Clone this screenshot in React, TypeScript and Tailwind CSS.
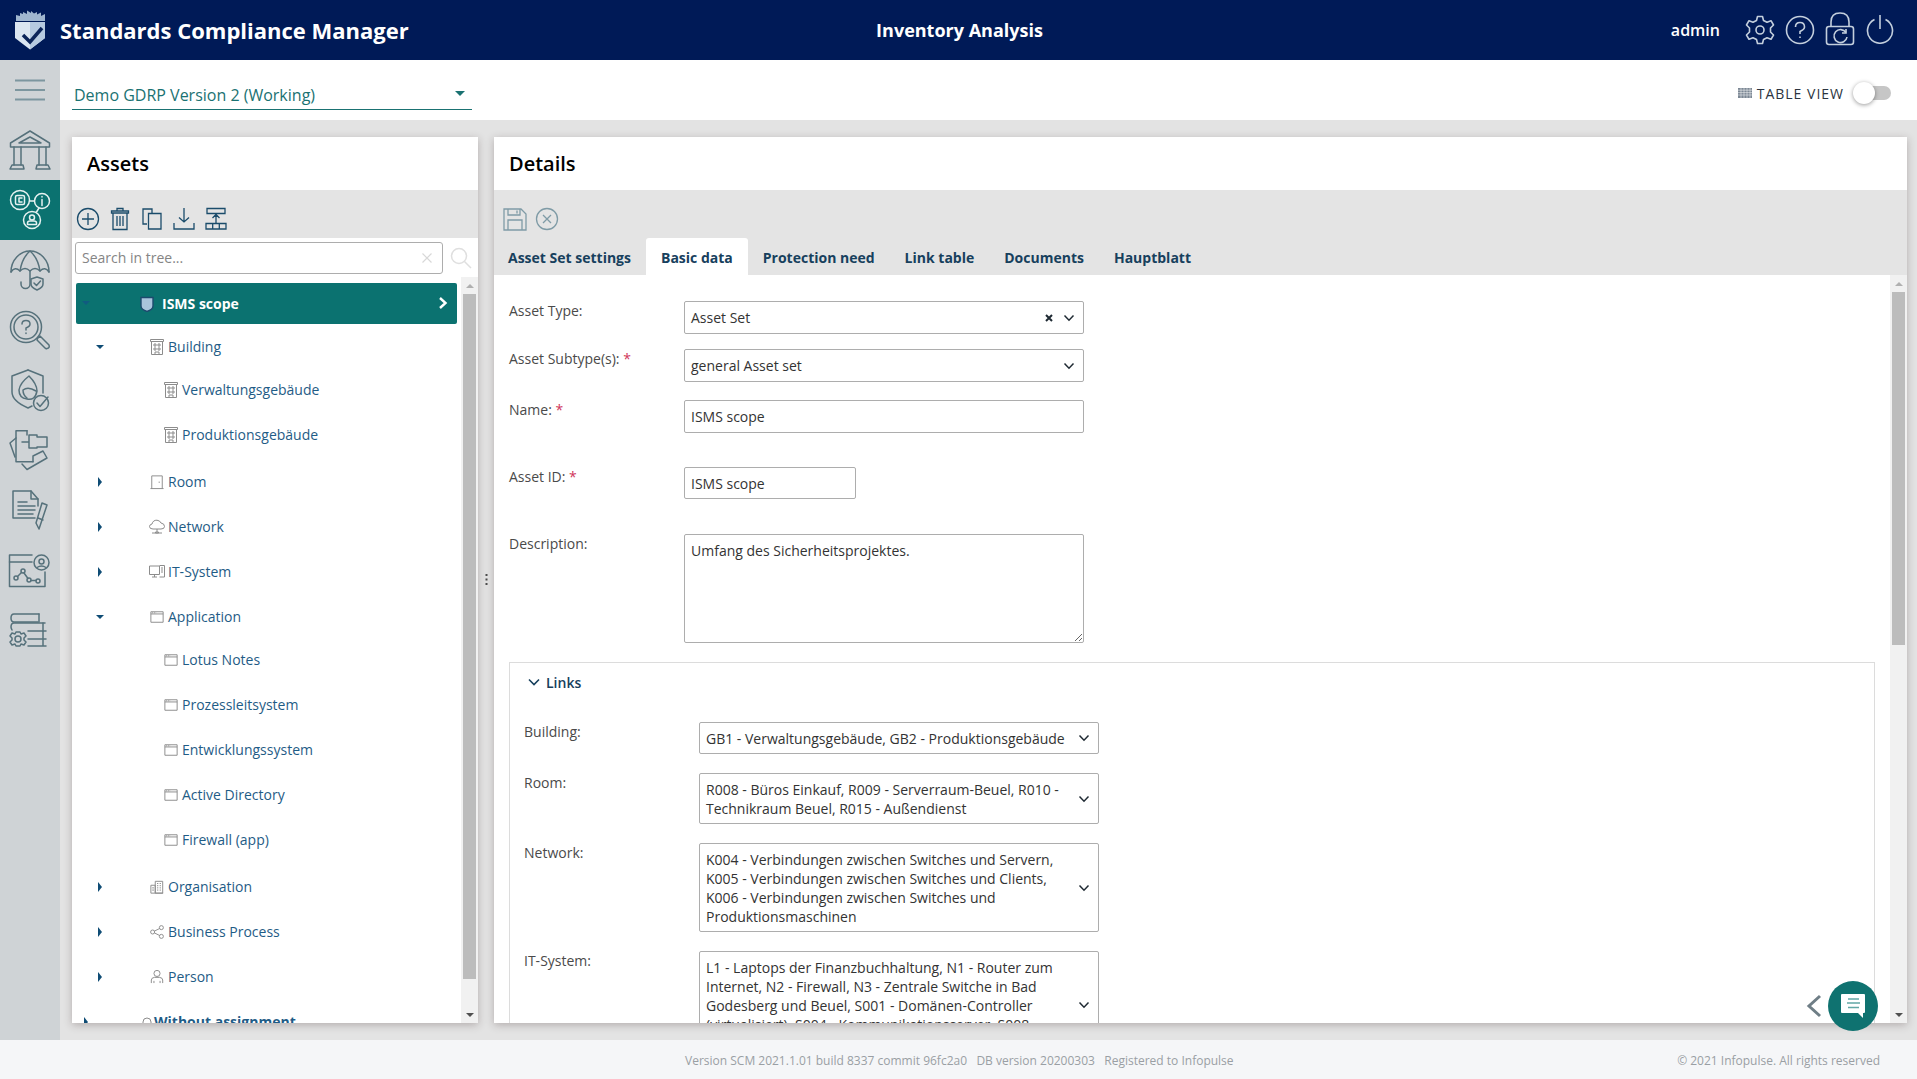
import type { ReactNode } from "react";

const Cell = ({ children, active }: { children: ReactNode; active?: boolean }) => (
  <div className={active ? "h-[60px] bg-[#0b7270]" : "h-[60px]"}>
    <svg
      width="60"
      height="60"
      viewBox="0 0 60 60"
      fill="none"
      stroke={active ? "#e6f2f1" : "#56717b"}
      strokeWidth="1.5"
      strokeLinecap="round"
      strokeLinejoin="round"
    >
      {children}
    </svg>
  </div>
);

const Sidebar = () => (
  <aside className="w-[60px] shrink-0 bg-[#cfd3d6]">
    <div className="h-[60px]">
      <svg width="60" height="60" viewBox="0 0 60 60" stroke="#7d969f" strokeWidth="2">
        <path d="M15 20.5H45M15 30H45M15 39.5H45" />
      </svg>
    </div>
    <Cell>
      <path d="M30 11L10.5 23V27H49.5V23Z" />
      <path d="M19 23L30 17L41 23Z" />
      <path d="M14 27V45M21 27V45M39 27V45M46 27V45" />
      <path d="M12 45H23L24 49H10ZM37 45H48L50 49H36Z" />
    </Cell>
    <Cell active>
      <circle cx="20" cy="20" r="9.5" />
      <rect x="15.5" y="15.5" width="9" height="9" rx="1.5" />
      <path d="M22 18H19V22H22" />
      <circle cx="42" cy="21" r="7.5" />
      <path d="M42 19.5V25.5M42 16.5V17" />
      <circle cx="32" cy="40" r="8.5" />
      <circle cx="32" cy="37.5" r="2.5" />
      <path d="M27.5 44.5V43Q27.5 41 30 41H34Q36.5 41 36.5 43V44.5Z" />
      <path d="M30 21H34M39 28L36.5 32" />
    </Cell>
    <Cell>
      <path d="M11 32C11 20 20 11 30 11C40 11 49 20 49 32" />
      <path d="M11 32Q15 26 20 31Q25 26 30 31Q35 26 40 31Q45 26 49 32" />
      <path d="M20 31Q22 18 30 11Q38 18 40 31" />
      <path d="M30 31V44A3.5 3.5 0 0 1 21 44V42" />
      <path d="M37 37L43 39V44Q43 47.5 37 50Q31 47.5 31 44V39Z" />
      <path d="M34 43L36.5 45.5L40.5 41" />
    </Cell>
    <Cell>
      <circle cx="26" cy="27" r="15.5" />
      <circle cx="26" cy="27" r="12" />
      <path d="M22 24Q22 20.5 26 20.5Q30 20.5 30 24Q30 26.5 26 28V30M26 33V33.5" />
      <path d="M37.5 38.5L40 36L49 45Q50 48 47 48.5Q46 49 45 48L37 40Z" />
    </Cell>
    <Cell>
      <path d="M28 10L12 16V32Q12 41 28 48L32 46" />
      <path d="M28 10L43 16V33" />
      <path d="M29 16Q37 24 37 31Q35 41 27 39Q19 38 19 30Q20 23 29 16Z" />
      <path d="M36 31Q28 26 23 30Q23 35 27 38" />
      <circle cx="41" cy="43" r="7.5" />
      <path d="M37 43L40 46.5L48 37" />
    </Cell>
    <Cell>
      <path d="M27 10.7H16V41.7H33" />
      <path d="M16 18L10 23L15 37" />
      <path d="M29 15H37V17H47V27H37V28H29ZM22 22H29" />
      <path d="M27 15V10.7" />
      <path d="M22 44L27 49.5L47 38L43 31L33 36V41.7" />
    </Cell>
    <Cell>
      <path d="M38 26V19L31 11H13V38H35" />
      <path d="M31 11V19H38" />
      <path d="M18 22H27M18 26H35M18 30H35M18 34H33" />
      <path d="M42 23L47 25L39 49L36 43Z" />
      <path d="M38 38L43 40" />
    </Cell>
    <Cell>
      <path d="M32 15H9.5V46.5H45V32" />
      <path d="M9.5 22H32" />
      <circle cx="41.5" cy="22.5" r="7.5" />
      <circle cx="41.5" cy="21.5" r="2.5" />
      <path d="M37 27.5Q41.5 24.5 46 27.5" />
      <circle cx="16" cy="38" r="2" />
      <circle cx="23" cy="31" r="2" />
      <circle cx="29" cy="40" r="2" />
      <circle cx="38" cy="41" r="2" />
      <path d="M17.5 36.5L21.5 32.5M24 33L28 38.5M31 40.5H36" />
    </Cell>
    <Cell>
      <path d="M39 14H14Q11 14 11 18Q11 22 14 22H38" />
      <path d="M45 23H14Q11 23 11 27Q11 28 12 30" />
      <path d="M43 23V31M39 14V22" />
      <path d="M46 31H28M46 39H28M46 46H28M43 31V46" />
      <circle cx="18" cy="39" r="3" />
      <path d="M16 32H20L21 34L24 33L26 36L24 38V40L26 42L24 45L21 44L20 46H16L15 44L12 45L10 42L12 40V38L10 36L12 33L15 34Z" />
    </Cell>
  </aside>
);

const Logo = () => (
  <svg width="32" height="40" viewBox="0 0 32 40" className="ml-[14px] shrink-0">
    <path d="M2 5L6 6V3L9 4V2L13 4V0.5L17 3V1L20 3.5L23 2V4.5L27 2.5V6L31 4V11H2Z" fill="#9fb6cf" />
    <path d="M1 12H31V28L16 39.5L1 28Z" fill="#dbe6f1" />
    <path d="M16 12H31V28L16 39.5Z" fill="#b6cae0" />
    <path d="M9 25L16 32L28 18" fill="none" stroke="#0b2459" strokeWidth="3.5" />
  </svg>
);

const Header = () => (
  <header className="h-[60px] shrink-0 bg-[#001a57] grid grid-cols-[minmax(0,1fr)_auto_minmax(0,1fr)] items-center text-white">
    <div className="flex items-center">
      <Logo />
      <span className="ml-[14px] text-[22px] font-bold whitespace-nowrap">Standards Compliance Manager</span>
    </div>
    <span className="pl-[2px] text-[18px] font-bold">Inventory Analysis</span>
    <div className="flex items-center justify-end pr-[23px]">
      <span className="text-[16px] font-semibold mr-[24px]">admin</span>
      <svg width="32" height="32" viewBox="0 0 32 32" fill="none" stroke="#c3cfdd" strokeWidth="1.6" className="mr-[9px]">
        <circle cx="16" cy="16" r="4" />
        <path d="M13.5 2.5H18.5L19.5 6.5L23 8.2L27 6.7L29.5 11L26.5 14V18L29.5 21L27 25.3L23 23.8L19.5 25.5L18.5 29.5H13.5L12.5 25.5L9 23.8L5 25.3L2.5 21L5.5 18V14L2.5 11L5 6.7L9 8.2L12.5 6.5Z" strokeLinejoin="round" />
      </svg>
      <svg width="30" height="30" viewBox="0 0 30 30" fill="none" stroke="#c3cfdd" strokeWidth="1.6" className="mr-[10px]">
        <circle cx="15" cy="15" r="13.5" />
        <path d="M10.5 12Q10.5 7.5 15 7.5Q19.5 7.5 19.5 12Q19.5 14.5 15 16.5V19" />
        <path d="M15 21.5V23" />
      </svg>
      <svg width="30" height="34" viewBox="0 0 30 34" fill="none" stroke="#c3cfdd" strokeWidth="1.6" className="mr-[11px] mb-[3px]">
        <path d="M6 14V10Q6 1 15 1Q24 1 24 10V14" />
        <rect x="1.5" y="14.5" width="27" height="18" rx="2.5" />
        <path d="M21 20.5A6.5 6.5 0 1 0 22 25" />
        <path d="M21 17V21H17" />
      </svg>
      <svg width="28" height="30" viewBox="0 0 28 30" fill="none" stroke="#c3cfdd" strokeWidth="1.6" className="mb-[2px]">
        <path d="M14 1V15" />
        <path d="M8.5 5.5A12.5 12.5 0 1 0 19.5 5.5" />
      </svg>
    </div>
  </header>
);

const SubBar = () => (
  <div className="h-[60px] shrink-0 bg-white flex items-center justify-between pl-[12px] pr-[26px]">
    <div className="w-[400px] h-[50px] border-b border-[#1a7272] flex items-end justify-between pl-[2px] pr-[7px] pb-[2px] self-start">
      <span className="text-[16px] leading-[24px] text-[#1a7272]">Demo GDRP Version 2 (Working)</span>
      <span className="mb-[11px] w-0 h-0 border-x-[5px] border-x-transparent border-t-[5px] border-t-[#1a7272]" />
    </div>
    <div className="flex items-center pt-[6px]">
      <svg width="14" height="10" viewBox="0 0 14 10" fill="#7b8794" className="mr-[5px]">
        <path d="M0 0H14V10H0Z" />
        <path d="M0 2.2H14M0 4.6H14M0 7H14M3 0V10M6 0V10M9 0V10M12 0V10" stroke="#fff" strokeWidth="0.5" />
      </svg>
      <span className="text-[14px] tracking-[1px] font-medium text-[#2b3440] mr-[10px]">TABLE VIEW</span>
      <div className="relative w-[37px] h-[14px] rounded-full bg-[#c6c6c6]">
        <div className="absolute left-[-1px] top-[-4px] w-[22px] h-[22px] rounded-full bg-white shadow-[0_1px_4px_rgba(0,0,0,0.4)]" />
      </div>
    </div>
  </div>
);

const ToolIcon = ({ children, color = "#1b4c6b" }: { children: ReactNode; color?: string }) => (
  <svg width="24" height="24" viewBox="0 0 24 24" fill="none" stroke={color} strokeWidth="1.3">
    {children}
  </svg>
);

const Scrollbar = ({ thumb }: { thumb: string }) => (
  <div className="w-[17px] shrink-0 bg-[#f1f1f1] flex flex-col items-center">
    <div className="h-[17px] flex items-center justify-center shrink-0">
      <span className="w-0 h-0 border-x-[4px] border-x-transparent border-b-[4px] border-b-[#b0b0b0]" />
    </div>
    <div className={`w-[13px] bg-[#bcbcbc] ${thumb}`} />
    <div className="flex-1" />
    <div className="h-[17px] flex items-center justify-center shrink-0">
      <span className="w-0 h-0 border-x-[4px] border-x-transparent border-t-[4px] border-t-[#505050]" />
    </div>
  </div>
);

const g = { fill: "none", stroke: "#8c8c8c", strokeWidth: 1.1 };

const BuildingIcon = () => (
  <svg width="14" height="16" viewBox="0 0 14 16" {...g} strokeWidth={1}>
    <path d="M0.5 0.5H13.5V2.5H0.5ZM1.5 2.5V15.5H12.5V2.5" />
    <path d="M4 5H6V7H4ZM8 5H10V7H8ZM4 9H6V11H4ZM8 9H10V11H8ZM5 15.5V13H9V15.5" />
  </svg>
);
const DoorIcon = () => (
  <svg width="14" height="16" viewBox="0 0 16 16" {...g}>
    <path d="M0.5 15.5H15.5M2 15.5V1H14V15.5M10.5 7.5V9" />
  </svg>
);
const CloudIcon = () => (
  <svg width="16" height="16" viewBox="0 0 16 16" {...g} strokeWidth={1} className="ml-[-1px]">
    <path d="M4 10Q0.5 10 0.5 7.5Q0.5 5.5 3 5Q4 1 8 1.2Q11 1.5 12 4Q15.5 4.5 15.5 7.5Q15.5 10 12 10Z" />
    <path d="M8 10V13M3 14H13M6.5 14H9.5V13H6.5Z" />
  </svg>
);
const MonitorIcon = () => (
  <svg width="16" height="16" viewBox="0 0 16 16" {...g} strokeWidth={1} className="ml-[-1px]">
    <path d="M10.5 2H0.5V10.5H10.5ZM3 13H8M5.5 10.5V13" />
    <path d="M10.5 1.5H15.5V13H10.5M12 4H14M12 6H14M12 8H14" />
  </svg>
);
const WindowIcon = () => (
  <svg width="14" height="14" viewBox="0 0 16 16" {...g}>
    <path d="M1 2H15V14H1ZM1 4.5H15" />
    <path d="M2.5 3.2H7" strokeDasharray="1 1" />
  </svg>
);
const OrgIcon = () => (
  <svg width="14" height="16" viewBox="0 0 16 16" {...g}>
    <path d="M1 15V6H6V15M6 15V1.5H14.5V15ZM1 15H15" />
    <path d="M8 4H9.5M11 4H12.5M8 6.5H9.5M11 6.5H12.5M8 9H9.5M11 9H12.5M8 11.5H9.5M11 11.5H12.5M2.5 9H4.5M2.5 11.5H4.5" />
  </svg>
);
const ShareIcon = () => (
  <svg width="14" height="14" viewBox="0 0 16 16" {...g}>
    <circle cx="3" cy="8" r="2.3" />
    <circle cx="13" cy="3" r="2.3" />
    <circle cx="13" cy="13" r="2.3" />
    <path d="M5 7L11 4M5 9L11 12" />
  </svg>
);
const PersonIcon = () => (
  <svg width="14" height="15" viewBox="0 0 16 16" {...g}>
    <circle cx="8" cy="4.5" r="3.5" />
    <path d="M1.5 15.5V12Q1.5 9.5 5 9H11Q14.5 9.5 14.5 12V15.5M4.5 13V15.5M11.5 13V15.5" />
  </svg>
);

type Node = { label: string; icon: ReactNode; open?: boolean; children?: string[]; childIcon?: ReactNode };

const nodes: Node[] = [
  { label: "Building", icon: <BuildingIcon />, open: true, children: ["Verwaltungsgebäude", "Produktionsgebäude"], childIcon: <BuildingIcon /> },
  { label: "Room", icon: <DoorIcon /> },
  { label: "Network", icon: <CloudIcon /> },
  { label: "IT-System", icon: <MonitorIcon /> },
  {
    label: "Application",
    icon: <WindowIcon />,
    open: true,
    children: ["Lotus Notes", "Prozessleitsystem", "Entwicklungssystem", "Active Directory", "Firewall (app)"],
    childIcon: <WindowIcon />,
  },
  { label: "Organisation", icon: <OrgIcon /> },
  { label: "Business Process", icon: <ShareIcon /> },
  { label: "Person", icon: <PersonIcon /> },
];

const Caret = ({ open }: { open?: boolean }) =>
  open ? (
    <span className="w-[8px] flex justify-center">
      <span className="w-0 h-0 border-x-[4px] border-x-transparent border-t-[4px] border-t-[#0f4c75]" />
    </span>
  ) : (
    <span className="w-[8px] flex justify-center">
      <span className="w-0 h-0 border-y-[5px] border-y-transparent border-l-[4px] border-l-[#0f4c75]" />
    </span>
  );

const Tree = () => (
  <div className="flex-1 min-w-0 overflow-hidden pt-[6px] text-[14px] text-[#1f5c86]">
    <div className="mx-[4px] h-[41px] rounded-[2px] bg-[#0b7270] flex items-center text-white font-bold relative">
      <span className="absolute left-[6px] top-[18px] w-0 h-0 border-x-[4px] border-x-transparent border-t-[4px] border-t-[#115b80]" />
      <svg width="14" height="16" viewBox="0 0 14 16" className="ml-[64px] mr-[8px]">
        <path d="M1 1.5H13V10Q13 13.5 7 15.5Q1 13.5 1 10Z" fill="#a9c4dc" stroke="#1d4a6e" strokeWidth="1.4" />
      </svg>
      <span>ISMS scope</span>
      <svg width="10" height="14" viewBox="0 0 10 14" fill="none" stroke="#fff" strokeWidth="2.4" className="absolute right-[9px] top-[13px]">
        <path d="M2 2L7.5 7L2 12" />
      </svg>
    </div>
    {nodes.map((n) => (
      <div key={n.label}>
        <div className="h-[45px] flex items-center pl-[24px]">
          <Caret open={n.open} />
          <span className="ml-[46px] w-[18px] flex">{n.icon}</span>
          <span>{n.label}</span>
        </div>
        {n.children && (
          <div className="mt-[-2px] mb-[2px]">
            {n.children.map((c) => (
              <div key={c} className="h-[45px] flex items-center pl-[92px]">
                <span className="w-[18px] flex">{n.childIcon}</span>
                <span>{c}</span>
              </div>
            ))}
          </div>
        )}
      </div>
    ))}
    <div className="h-[45px] flex items-center pl-[10px] font-bold">
      <Caret />
      <svg width="14" height="14" viewBox="0 0 14 14" fill="none" stroke="#8c8c8c" className="ml-[50px]">
        <path d="M3 7A4 4 0 0 1 11 7V12H3Z" />
      </svg>
      <span>Without assignment</span>
    </div>
  </div>
);

const AssetsPanel = () => (
  <section className="w-[406px] shrink-0 bg-white shadow-[0_2px_8px_rgba(70,50,50,0.3)] flex flex-col overflow-hidden">
    <div className="h-[53px] shrink-0 flex items-center pl-[15px] text-[20px] font-semibold text-black">Assets</div>
    <div className="h-[48px] shrink-0 bg-[#e4e4e4] flex items-start pt-[17px] pl-[4px] gap-[8px]">
      <ToolIcon>
        <circle cx="12" cy="12" r="10.5" />
        <path d="M12 6V18M6 12H18" />
      </ToolIcon>
      <ToolIcon>
        <path d="M5 6H19V22.5H5ZM3.5 4H20.5V6H3.5ZM9 4V1.5H15V4M9 9V19M12 9V19M15 9V19" />
      </ToolIcon>
      <ToolIcon>
        <path d="M7 17H3V2H12V6M8.5 6.5H21V22H8.5Z" />
      </ToolIcon>
      <ToolIcon>
        <path d="M12 1V15M7 10.5L12 15L17 10.5M2 16V22H22V16" />
      </ToolIcon>
      <ToolIcon>
        <path d="M3 1.5H21V6.5H3ZM12 16V8M8.5 11L12 7.5L15.5 11M2 16.5H22V22H2ZM8.7 16.5V22M15.3 16.5V22" />
      </ToolIcon>
    </div>
    <div className="h-[39px] shrink-0 flex items-center pl-[3px]">
      <div className="w-[368px] h-[32px] border border-[#adadad] rounded-[3px] flex items-center justify-between pl-[6px] pr-[10px] text-[14px] text-[#858585]">
        <span>Search in tree...</span>
        <svg width="10" height="10" viewBox="0 0 10 10" stroke="#d8d8d8" strokeWidth="1.2">
          <path d="M0.5 0.5L9.5 9.5M9.5 0.5L0.5 9.5" />
        </svg>
      </div>
      <svg width="22" height="22" viewBox="0 0 22 22" fill="none" stroke="#dfdfdf" strokeWidth="1.5" className="ml-[7px]">
        <circle cx="9" cy="9" r="7.5" />
        <path d="M14.5 14.5L21 21" />
      </svg>
    </div>
    <div className="flex-1 min-h-0 flex">
      <Tree />
      <Scrollbar thumb="h-[685px]" />
    </div>
  </section>
);

const Chevron = () => (
  <svg width="12" height="8" viewBox="0 0 12 8" fill="none" stroke="#1f2a33" strokeWidth="1.5" className="shrink-0">
    <path d="M1.5 1.5L6 6.2L10.5 1.5" />
  </svg>
);

const Label = ({ children, req }: { children: string; req?: boolean }) => (
  <div className="w-[175px] shrink-0 leading-[20px] text-[#4a4a4a]">
    {children}
    {req && <span className="text-[#d0365a]"> *</span>}
  </div>
);

const fieldCls = "border border-[#adadad] rounded-[2px] bg-white";

const LinkRow = ({ label, lines }: { label: string; lines: string[] }) => (
  <div className="flex mb-[19px]">
    <Label>{label}</Label>
    <div className={`${fieldCls} w-[400px] shrink-0 flex items-center pl-[6px] pr-[8px] py-[5.5px] leading-[19px] text-[#333]`}>
      <div className="flex-1 min-w-0">
        {lines.map((l) => (
          <div key={l} className="whitespace-nowrap">{l}</div>
        ))}
      </div>
      <Chevron />
    </div>
  </div>
);

const tabs = ["Asset Set settings", "Basic data", "Protection need", "Link table", "Documents", "Hauptblatt"];

const DetailsPanel = () => (
  <section className="flex-1 min-w-0 bg-white shadow-[0_2px_8px_rgba(70,50,50,0.3)] flex flex-col overflow-hidden">
    <div className="h-[53px] shrink-0 flex items-center pl-[15px] text-[20px] font-semibold text-black">Details</div>
    <div className="h-[85px] shrink-0 bg-[#e4e4e4] flex flex-col">
      <div className="h-[48px] flex items-start pt-[17px] pl-[9px] gap-[8px]">
        <ToolIcon color="#7f9ba6">
          <path d="M1 2H18L23 7V23H1ZM5 2V8H17V2M14 3.5V6.5M5 23V13H19V23" />
        </ToolIcon>
        <ToolIcon color="#7f9ba6">
          <circle cx="12" cy="12" r="10.5" />
          <path d="M8 8L16 16M16 8L8 16" />
        </ToolIcon>
      </div>
      <div className="h-[37px] flex text-[14px] font-bold text-[#17405d] ml-[-1px]">
        {tabs.map((t) => (
          <div
            key={t}
            className={
              t === "Basic data"
                ? "px-[15px] pt-[2px] flex items-center bg-white rounded-t-[3px]"
                : "px-[15px] pt-[2px] flex items-center"
            }
          >
            {t}
          </div>
        ))}
      </div>
    </div>
    <div className="flex-1 min-h-0 flex">
      <div className="flex-1 min-w-0 overflow-hidden pt-[26px] pl-[15px] pr-[15px] text-[14px] text-[#333]">
        <div className="flex mb-[15px]">
          <Label>Asset Type:</Label>
          <div className={`${fieldCls} w-[400px] h-[33px] flex items-center justify-between pl-[6px] pr-[8px]`}>
            <span>Asset Set</span>
            <span className="flex items-center gap-[10px]">
              <svg width="8" height="8" viewBox="0 0 8 8" stroke="#1f2a33" strokeWidth="2">
                <path d="M1 1L7 7M7 1L1 7" />
              </svg>
              <Chevron />
            </span>
          </div>
        </div>
        <div className="flex mb-[18px]">
          <Label req>Asset Subtype(s):</Label>
          <div className={`${fieldCls} w-[400px] h-[33px] flex items-center justify-between pl-[6px] pr-[8px]`}>
            <span>general Asset set</span>
            <Chevron />
          </div>
        </div>
        <div className="flex mb-[34px]">
          <Label req>Name:</Label>
          <input readOnly value="ISMS scope" className={`${fieldCls} w-[400px] h-[33px] pl-[6px] outline-none`} />
        </div>
        <div className="flex mb-[35px]">
          <Label req>Asset ID:</Label>
          <input readOnly value="ISMS scope" className={`${fieldCls} w-[172px] h-[32px] pl-[6px] outline-none`} />
        </div>
        <div className="flex mb-[19px]">
          <Label>Description:</Label>
          <textarea
            readOnly
            value="Umfang des Sicherheitsprojektes."
            className={`${fieldCls} w-[400px] h-[109px] px-[6px] py-[6px] leading-[19px] outline-none`}
          />
        </div>
        <div className="border border-[#dcdcdc] pl-[14px] h-[500px]">
          <div className="h-[59px] flex items-start pt-[9px] font-semibold text-[#17405d]">
            <svg width="12" height="8" viewBox="0 0 12 8" fill="none" stroke="#17405d" strokeWidth="1.6" className="ml-[4px] mr-[6px] mt-[6px]">
              <path d="M1 1.5L6 6.5L11 1.5" />
            </svg>
            Links
          </div>
          <LinkRow label="Building:" lines={["GB1 - Verwaltungsgebäude, GB2 - Produktionsgebäude"]} />
          <LinkRow
            label="Room:"
            lines={["R008 - Büros Einkauf, R009 - Serverraum-Beuel, R010 -", "Technikraum Beuel, R015 - Außendienst"]}
          />
          <LinkRow
            label="Network:"
            lines={[
              "K004 - Verbindungen zwischen Switches und Servern,",
              "K005 - Verbindungen zwischen Switches und Clients,",
              "K006 - Verbindungen zwischen Switches und",
              "Produktionsmaschinen",
            ]}
          />
          <LinkRow
            label="IT-System:"
            lines={[
              "L1 - Laptops der Finanzbuchhaltung, N1 - Router zum",
              "Internet, N2 - Firewall, N3 - Zentrale Switche in Bad",
              "Godesberg und Beuel, S001 - Domänen-Controller",
              "(virtualisiert), S004 - Kommunikationsserver, S008",
              "\u00a0",
            ]}
          />
        </div>
      </div>
      <Scrollbar thumb="h-[353px]" />
    </div>
  </section>
);

const Footer = () => (
  <footer className="h-[39px] shrink-0 pt-[2px] bg-[#f5f6f8] flex items-center justify-between pl-[685px] pr-[37px] text-[12px] text-[#9a9fa4]">
    <span className="whitespace-nowrap">
      Version SCM 2021.1.01 build 8337 commit 96fc2a0&nbsp;&nbsp;&nbsp;DB version 20200303&nbsp;&nbsp;&nbsp;Registered to Infopulse
    </span>
    <span>© 2021 Infopulse. All rights reserved</span>
  </footer>
);

export default function App() {
  return (
    <div className="h-screen w-full overflow-hidden flex flex-col relative font-['Open_Sans',sans-serif] bg-[#e3e3e3]">
      <Header />
      <div className="flex-1 min-h-0 flex">
        <Sidebar />
        <div className="flex-1 min-w-0 flex flex-col">
          <SubBar />
          <div className="flex-1 min-h-0 flex pt-[17px] pb-[17px] pl-[12px] pr-[10px]">
            <AssetsPanel />
            <div className="w-[16px] shrink-0 flex items-center justify-center mt-[-2px]">
              <svg width="3" height="11" viewBox="0 0 3 11" fill="#4d4d4d">
                <path d="M0.5 0H2.5V2H0.5ZM0.5 4.5H2.5V6.5H0.5ZM0.5 9H2.5V11H0.5Z" />
              </svg>
            </div>
            <DetailsPanel />
          </div>
        </div>
      </div>
      <Footer />
      <svg width="16" height="24" viewBox="0 0 16 24" fill="none" stroke="#6f7e86" strokeWidth="3" className="absolute left-[1806px] top-[994px]">
        <path d="M14 2L3 12L14 22" />
      </svg>
      <div className="absolute left-[1828px] top-[981px] w-[50px] h-[50px] rounded-full bg-[#0f7270] flex items-center justify-center">
        <svg width="26" height="26" viewBox="0 0 26 26">
          <path d="M2 1H24Q25 1 25 2V19Q25 20 24 20H23V25L18 20H2Q1 20 1 19V2Q1 1 2 1Z" fill="#fff" />
          <path d="M8 6H19M7 10H20M8 14.5H19" stroke="#62a7a5" strokeWidth="1.6" />
        </svg>
      </div>
    </div>
  );
}
